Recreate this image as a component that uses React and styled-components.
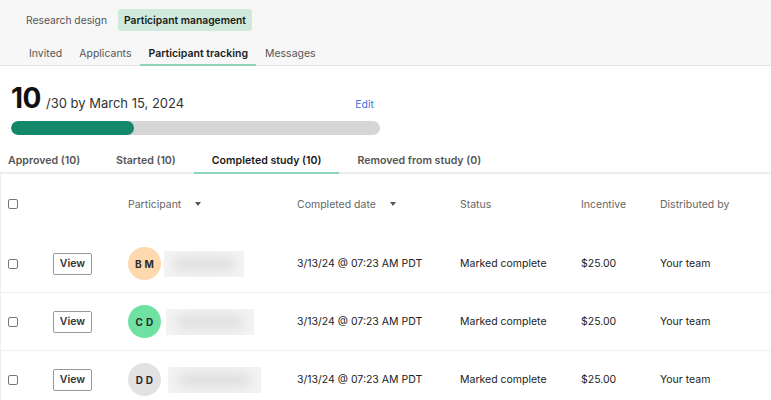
import React from 'react';
import styled, { createGlobalStyle } from 'styled-components';

const GlobalStyle = createGlobalStyle`
  html, body {
    margin: 0;
    padding: 0;
    background: #ffffff;
    font-family: Inter, "Noto Sans", sans-serif;
    color: #222;
  }
  * { box-sizing: border-box; }
`;

const Page = styled.div`
  width: 771px;
  height: 400px;
  overflow: hidden;
  background: #fff;
`;

const TopNav = styled.div`
  background: #f7f7f7;
  border-bottom: 1px solid #e4e4e4;
  height: 66px;
  display: flex;
  flex-direction: column;
`;

const SectionRow = styled.div`
  display: flex;
  align-items: center;
  gap: 5px;
  padding: 9px 0 0 20px;
`;

const SectionItem = styled.div`
  height: 22px;
  padding: 0 6px;
  display: flex;
  align-items: center;
  font-size: 10.3px;
  border-radius: 3px;
  font-weight: ${p => (p.active ? 600 : 400)};
  color: ${p => (p.active ? '#1a1a1a' : '#555')};
  background: ${p => (p.active ? '#cfe9dd' : 'transparent')};
`;

const SubTabs = styled.div`
  display: flex;
  margin-top: auto;
  padding-left: 21px;
  gap: 1px;
`;

const SubTab = styled.div`
  height: 23px;
  padding: 0 8px;
  display: flex;
  align-items: center;
  font-size: 10.5px;
  margin-bottom: -1px;
  font-weight: ${p => (p.active ? 600 : 400)};
  color: ${p => (p.active ? '#1a1a1a' : '#555')};
  border-bottom: 2px solid ${p => (p.active ? '#8fd3b7' : 'transparent')};
`;

const Summary = styled.div`
  padding: 15px 0 0 11px;
  width: 380px;
`;

const GoalLine = styled.div`
  display: flex;
  align-items: baseline;
`;

const Count = styled.span`
  font-size: 28px;
  font-weight: 700;
  color: #111;
  letter-spacing: -0.5px;
`;

const Target = styled.span`
  font-size: 13px;
  color: #333;
  margin-left: 5px;
`;

const EditLink = styled.a`
  margin-left: auto;
  font-size: 10.5px;
  color: #3d74e0;
  text-decoration: none;
  margin-right: 6px;
`;

const Track = styled.div`
  margin-top: 6px;
  height: 14px;
  border-radius: 7px;
  background: #d6d6d6;
  overflow: hidden;
`;

const Fill = styled.div`
  height: 100%;
  border-radius: 7px;
  background: #13886a;
`;

const StatusTabs = styled.div`
  display: flex;
  margin-top: 13px;
  border-bottom: 2px solid #ededed;
  height: 26px;
  align-items: stretch;
`;

const StatusTab = styled.div`
  display: flex;
  align-items: center;
  padding: 0 18px 0 ${p => p.padLeft || 18}px;
  margin-bottom: -2px;
  font-size: 10.6px;
  font-weight: 600;
  color: ${p => (p.active ? '#1a1a1a' : '#555')};
  border-bottom: 2px solid ${p => (p.active ? '#8fd3b7' : 'transparent')};
`;

const Table = styled.div`
  border-left: 1px solid #eeeeee;
`;

const Row = styled.div`
  display: grid;
  grid-template-columns: 52px 75px 169px 163px 121px 79px 1fr;
  align-items: center;
  height: ${p => p.h || 58}px;
  border-bottom: 1px solid ${p => (p.head ? 'transparent' : '#f0f0f0')};
  font-size: 10.5px;
  color: ${p => (p.head ? '#666' : '#222')};
`;

const Cell = styled.div`
  display: flex;
  align-items: center;
  white-space: nowrap;
`;

const CheckCell = styled(Cell)`
  padding-left: 7px;
`;

const Checkbox = styled.span`
  width: 10px;
  height: 10px;
  border: 1px solid #777;
  border-radius: 2px;
  background: #fff;
`;

const Caret = styled.span`
  width: 0;
  height: 0;
  margin-left: ${p => p.gap}px;
  border-left: 3.5px solid transparent;
  border-right: 3.5px solid transparent;
  border-top: 4px solid #555;
`;

const ViewButton = styled.button`
  height: 22px;
  width: 39px;
  padding: 0;
  border: 1px solid #9a9a9a;
  border-radius: 2px;
  background: #fff;
  font-family: inherit;
  font-size: 10.5px;
  font-weight: 600;
  color: #333;
`;

const Avatar = styled.div`
  width: 33px;
  height: 33px;
  border-radius: 50%;
  background: ${p => p.bg};
  display: flex;
  align-items: center;
  justify-content: center;
  font-size: 10px;
  font-weight: 700;
  letter-spacing: 0.3px;
  color: #2b2b2b;
  flex-shrink: 0;
`;

const BlurredName = styled.div`
  margin-left: ${p => p.offset}px;
  width: ${p => p.w}px;
  height: 26px;
  background: #f3f3f3;
  overflow: hidden;
  position: relative;
  &::after {
    content: '';
    position: absolute;
    inset: 7px 10px;
    background: #dcdcdc;
    border-radius: 10px;
    filter: blur(6px);
  }
`;

const participants = [
  { initials: 'B M', bg: '#fdd9ad', w: 80, offset: 3 },
  { initials: 'C D', bg: '#6fe2a2', w: 88, offset: 5 },
  { initials: 'D D', bg: '#e2e2e2', w: 93, offset: 7 },
];

export default function App() {
  return (
    <Page>
      <GlobalStyle />
      <TopNav>
        <SectionRow>
          <SectionItem>Research design</SectionItem>
          <SectionItem active>Participant management</SectionItem>
        </SectionRow>
        <SubTabs>
          <SubTab>Invited</SubTab>
          <SubTab>Applicants</SubTab>
          <SubTab active>Participant tracking</SubTab>
          <SubTab>Messages</SubTab>
        </SubTabs>
      </TopNav>

      <Summary>
        <GoalLine>
          <Count>10</Count>
          <Target>/30 by March 15, 2024</Target>
          <EditLink href="#">Edit</EditLink>
        </GoalLine>
        <Track>
          <Fill style={{ width: `${(10 / 30) * 100}%` }} />
        </Track>
      </Summary>

      <StatusTabs>
        <StatusTab padLeft={8}>Approved (10)</StatusTab>
        <StatusTab>Started (10)</StatusTab>
        <StatusTab active>Completed study (10)</StatusTab>
        <StatusTab>Removed from study (0)</StatusTab>
      </StatusTabs>

      <Table>
        <Row head h={61}>
          <CheckCell><Checkbox /></CheckCell>
          <Cell />
          <Cell>Participant<Caret gap={14} /></Cell>
          <Cell>Completed date<Caret gap={14} /></Cell>
          <Cell>Status</Cell>
          <Cell>Incentive</Cell>
          <Cell>Distributed by</Cell>
        </Row>
        {participants.map(p => (
          <Row key={p.initials}>
            <CheckCell><Checkbox /></CheckCell>
            <Cell><ViewButton>View</ViewButton></Cell>
            <Cell>
              <Avatar bg={p.bg}>{p.initials}</Avatar>
              <BlurredName w={p.w} offset={p.offset} />
            </Cell>
            <Cell>3/13/24 @ 07:23 AM PDT</Cell>
            <Cell>Marked complete</Cell>
            <Cell>$25.00</Cell>
            <Cell>Your team</Cell>
          </Row>
        ))}
      </Table>
    </Page>
  );
}
